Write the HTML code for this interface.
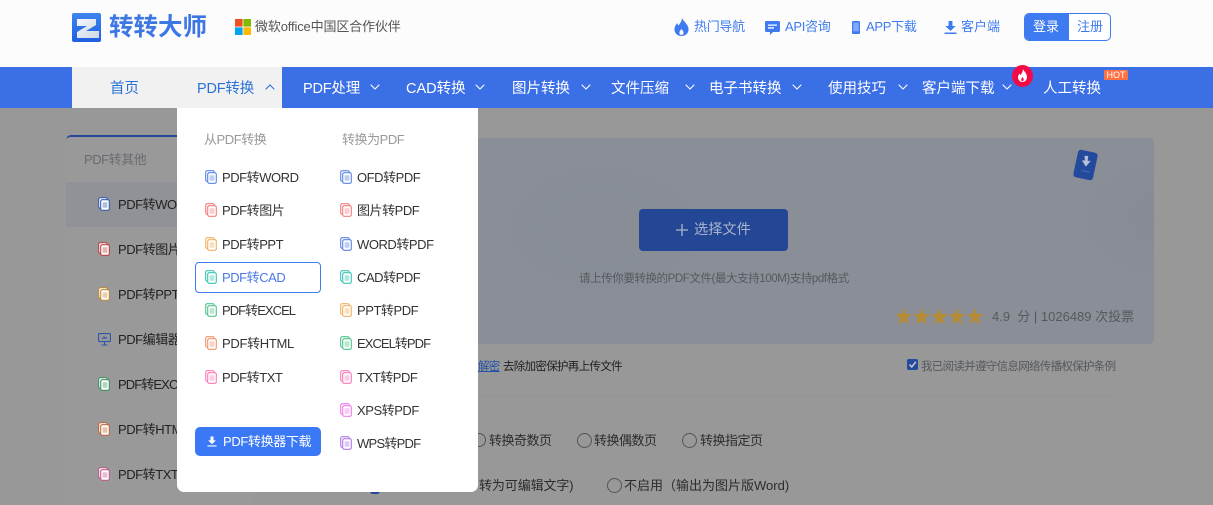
<!DOCTYPE html>
<html lang="zh"><head><meta charset="utf-8"><title>转转大师</title>
<style>
html,body{margin:0;padding:0;width:1213px;height:505px;overflow:hidden;background:#fff}
body{position:relative;font-family:"Liberation Sans","Noto Sans CJK SC",sans-serif;font-size:13px;color:#333}
.t{position:absolute;white-space:nowrap;line-height:18px}
.a{position:absolute}
svg.i{position:absolute;overflow:visible}
.n{color:#fff;font-size:14.5px;top:80px}
.h{color:#3f7bf0;font-size:13px;top:18px;letter-spacing:-.3px}
.m{color:#333;font-size:13px;letter-spacing:-.45px}
.s{color:#2c2c2c;font-size:13px;letter-spacing:-.5px}
.b{color:#222;font-size:13px;letter-spacing:-.45px}
.c{color:#55585f;font-size:11.5px;letter-spacing:-.7px}
</style></head><body>
<svg width="0" height="0" style="position:absolute"><defs>
<linearGradient id="zb" x1="0" y1="0" x2="0" y2="1"><stop offset="0" stop-color="#3f86ee"/><stop offset="1" stop-color="#1f5fe0"/></linearGradient>
<linearGradient id="zw" x1="0" y1="0" x2="1" y2="1"><stop offset="0" stop-color="#f4f7fb"/><stop offset="1" stop-color="#cfd8e4"/></linearGradient>
<g id="doc"><rect x="0.7" y="0.7" width="8.6" height="10.6" rx="1.6" fill="#fff" stroke="currentColor" stroke-width="1.1"/><rect x="2.7" y="2.7" width="8.6" height="10.6" rx="1.6" fill="#fff" stroke="currentColor" stroke-width="1.1"/><rect x="4.6" y="5.2" width="4.8" height="5.6" rx=".5" fill="currentColor" opacity=".4"/></g>
<path id="ch" d="M1 5 L5 1 L9 5" fill="none" stroke-width="1.1" stroke-linecap="round"/>
<path id="dl" d="M4.2 0h3.6v4.6h3L6 9.2 1.2 4.6h3zM.5 10.6h11V12H.5z"/>
<polygon id="star" points="8.500,0 10.600,6 17,6.200 11.900,10.100 13.800,16.500 8.500,12.700 3.200,16.500 5.100,10.100 0,6.200 6.400,6"/>
</defs></svg>

<!-- header -->
<div class="a" style="left:0;top:0;width:1213px;height:67px;background:#fcfcfc"></div>
<svg class="i" style="left:72px;top:13px" width="29" height="29" viewBox="0 0 29 29"><rect width="29" height="29" rx="2" fill="url(#zb)"/><path d="M5 6H24V12L14 18H27V25H5V19L15 13H5Z" fill="url(#zw)"/></svg>
<div class="t" style="left:109px;top:13px;font-size:24.5px;line-height:29px;font-weight:700;color:#3d77e4">转转大师</div>
<svg class="i" style="left:235px;top:19px" width="16" height="16"><rect width="7.600" height="7.600" fill="#f25022"/><rect x="8.400" width="7.600" height="7.600" fill="#7fba00"/><rect y="8.400" width="7.600" height="7.600" fill="#00a4ef"/><rect x="8.400" y="8.400" width="7.600" height="7.600" fill="#ffb900"/></svg>
<div class="t" style="left:255px;top:18px;color:#555;font-size:13px;letter-spacing:-.15px">微软office中国区合作伙伴</div>

<svg class="i" style="left:674px;top:18px" width="15" height="18" viewBox="0 0 15 18"><path d="M8 0c1 3 6 6 6.500 10.500C15 15 11.500 18 7.500 18S0 15 .5 10.500C.8 8 2.500 6.500 3 5c.8 1 1 2 1.500 2.500C6 5.500 8 3 8 0zM7.500 11c-1 1.500-2.500 2.500-2 4.500.3 1 1.200 1.500 2 1.500s1.800-.5 2-1.500c.4-2-1-3-2-4.500z" fill="#3f7bf0"/></svg>
<div class="t h" style="left:694px">热门导航</div>
<svg class="i" style="left:765px;top:21px" width="15" height="14" viewBox="0 0 15 14"><path d="M1.500 0h12A1.500 1.500 0 0 1 15 1.500v8a1.500 1.500 0 0 1-1.500 1.500H8l-3 3v-3H1.500A1.500 1.500 0 0 1 0 9.500v-8A1.500 1.500 0 0 1 1.500 0z" fill="#3f7bf0"/><path d="M3 3.500h9v1.300H3zM3 6.300h6v1.300H3z" fill="#fff"/></svg>
<div class="t h" style="left:785px">API咨询</div>
<svg class="i" style="left:852px;top:21px" width="8" height="13" viewBox="0 0 8 13"><rect width="8" height="13" rx="1.300" fill="#3f7bf0"/><rect x="1.200" y="1.700" width="5.600" height="8.600" fill="#7fa8f5"/></svg>
<div class="t h" style="left:866px">APP下载</div>
<svg class="i" style="left:944px;top:21px" width="13" height="13" viewBox="0 0 12 12" fill="#3f7bf0"><use href="#dl"/></svg>
<div class="t h" style="left:961px;letter-spacing:0">客户端</div>
<div class="a" style="left:1024px;top:13px;width:85px;height:26px;border:1px solid #3f7bf0;border-radius:5px;background:#fff;overflow:hidden"><div style="width:44px;height:26px;background:#3f7bf0"></div></div>
<div class="t" style="left:1033px;top:18px;color:#fff;font-size:13px">登录</div>
<div class="t" style="left:1077px;top:18px;color:#3f7bf0;font-size:13px">注册</div>

<!-- nav -->
<div class="a" style="left:0;top:67px;width:1213px;height:41px;background:#3b6fe6"></div>
<div class="a" style="left:72px;top:67px;width:210px;height:41px;background:#f1f1f1"></div>
<div class="t" style="left:110px;top:80px;font-size:14.5px;color:#2a72d8">首页</div>
<div class="t" style="left:197px;top:80px;font-size:14.5px;color:#2a72d8;letter-spacing:-.2px">PDF转换</div>
<svg class="i" style="left:265px;top:84px;stroke:#2a72d8" width="10" height="6"><use href="#ch"/></svg>
<div class="t n" style="left:303px;letter-spacing:-.2px">PDF处理</div>
<div class="t n" style="left:406px">CAD转换</div>
<div class="t n" style="left:512px">图片转换</div>
<div class="t n" style="left:611px">文件压缩</div>
<div class="t n" style="left:709px">电子书转换</div>
<div class="t n" style="left:828px">使用技巧</div>
<div class="t n" style="left:922px">客户端下载</div>
<div class="t n" style="left:1043px">人工转换</div>
<svg class="i" style="left:370px;top:84px;stroke:#fff;transform:scaleY(-1)" width="10" height="6"><use href="#ch"/></svg>
<svg class="i" style="left:475px;top:84px;stroke:#fff;transform:scaleY(-1)" width="10" height="6"><use href="#ch"/></svg>
<svg class="i" style="left:581px;top:84px;stroke:#fff;transform:scaleY(-1)" width="10" height="6"><use href="#ch"/></svg>
<svg class="i" style="left:685px;top:84px;stroke:#fff;transform:scaleY(-1)" width="10" height="6"><use href="#ch"/></svg>
<svg class="i" style="left:792px;top:84px;stroke:#fff;transform:scaleY(-1)" width="10" height="6"><use href="#ch"/></svg>
<svg class="i" style="left:898px;top:84px;stroke:#fff;transform:scaleY(-1)" width="10" height="6"><use href="#ch"/></svg>
<svg class="i" style="left:1002px;top:84px;stroke:#fff;transform:scaleY(-1)" width="10" height="6"><use href="#ch"/></svg>
<svg class="i" style="left:1012px;top:65px" width="21" height="22" viewBox="0 0 21 22"><ellipse cx="10.500" cy="11" rx="10.500" ry="11" fill="#f50a45"/><path d="M11 4c.5 2 4 4 4 8 0 3-2 5-4.500 5S6 15 6 12c0-1.500 1-2.500 1.500-3.500.4.700.6 1.200 1 1.500C9.800 8.500 11 6.500 11 4z" fill="#fff"/><path d="M10.500 12c-.6 1-1.500 1.700-1.200 3 .2.800.8 1.200 1.200 1.200s1-.4 1.200-1.200c.3-1.300-.6-2-1.200-3z" fill="#f50a45"/></svg>
<div class="a" style="left:1104px;top:70px;width:24px;height:10px;background:#ff7043;border-radius:1px;color:#fff;font-size:9px;line-height:10px;text-align:center">HOT</div>

<!-- dim page -->
<div class="a" style="left:0;top:108px;width:1213px;height:397px;background:#989898"></div>
<div class="a" style="left:66px;top:135px;width:186px;height:370px;background:#999;border-top:2px solid #24479a;border-radius:5px 0 0 0;box-sizing:border-box"></div>
<div class="a" style="left:66px;top:182px;width:186px;height:45px;background:#919297"></div>
<div class="t" style="left:84px;top:151px;color:#6a6a70;font-size:13px;letter-spacing:-.45px">PDF转其他</div>
<svg class="i" style="left:98px;top:197px;color:#3a5fae" width="12" height="14"><use href="#doc"/></svg><div class="t b" style="left:118px;top:196px">PDF转WORD</div>
<svg class="i" style="left:98px;top:242px;color:#bb4444" width="12" height="14"><use href="#doc"/></svg><div class="t b" style="left:118px;top:241px">PDF转图片</div>
<svg class="i" style="left:98px;top:287px;color:#bd8a36" width="12" height="14"><use href="#doc"/></svg><div class="t b" style="left:118px;top:286px">PDF转PPT</div>
<svg class="i" style="left:98px;top:333px" width="14" height="13" viewBox="0 0 14 13" fill="none" stroke="#2f55a8" stroke-width="1.100"><rect x=".6" y=".6" width="11.800" height="8" rx="1"/><path d="M6.500 8.800v3M3.500 12h6M4 6l2-2 1.500 1.500L9 4"/></svg><div class="t b" style="left:118px;top:331px">PDF编辑器</div>
<svg class="i" style="left:98px;top:377px;color:#3c9460" width="12" height="14"><use href="#doc"/></svg><div class="t b" style="left:118px;top:376px;letter-spacing:-.9px">PDF转EXCEL</div>
<svg class="i" style="left:98px;top:422px;color:#bd6a3c" width="12" height="14"><use href="#doc"/></svg><div class="t b" style="left:118px;top:421px">PDF转HTML</div>
<svg class="i" style="left:98px;top:467px;color:#c05a8c" width="12" height="14"><use href="#doc"/></svg><div class="t b" style="left:118px;top:466px">PDF转TXT</div>

<!-- upload panel -->
<div class="a" style="left:252px;top:138px;width:902px;height:206px;background:radial-gradient(ellipse 110px 70px at 930px 80px,#848993,transparent),radial-gradient(ellipse 120px 80px at 350px 90px,#878c95,transparent),#8a8f97;border-radius:5px;background-origin:border-box"></div>
<svg class="i" style="left:1072px;top:149px" width="27" height="32" viewBox="0 0 27 32"><rect x="3.500" y="2" width="20" height="28" rx="3" fill="#234a9d" transform="rotate(12 13.500 16)"/><path d="M12.500 7h3.600l-.5 5h3l-4.800 5.500-3.700-6h3zM9.500 21.500l8 1.700" fill="#b9c4da" stroke="#8c9cc0" stroke-width=".4"/></svg>
<div class="a" style="left:639px;top:209px;width:149px;height:42px;background:#244795;border-radius:4px"></div>
<svg class="i" style="left:676px;top:224px" width="12" height="12"><path d="M6 0v12M0 6h12" stroke="#a9b4cc" stroke-width="1.300"/></svg>
<div class="t" style="left:694px;top:221px;color:#a9b4cc;font-size:14.2px">选择文件</div>
<div class="t" style="left:579px;top:270px;color:#55585f;font-size:11.5px;letter-spacing:-.42px">请上传你要转换的PDF文件(最大支持100M)支持pdf格式</div>
<svg class="i" style="left:895px;top:308px" width="90" height="17" fill="#b58a35"><use href="#star" x="0"/><use href="#star" x="18"/><use href="#star" x="36"/><use href="#star" x="53.500"/><use href="#star" x="71.500"/></svg>
<div class="t" style="left:992px;top:308px;color:#55585f;font-size:13px">4.9&nbsp; 分 | 1026489 次投票</div>
<div class="t" style="left:478px;top:358px;color:#2550a8;font-size:11.5px;letter-spacing:-.7px;text-decoration:underline">解密</div>
<div class="t" style="left:503px;top:358px;color:#222;font-size:11.5px;letter-spacing:-.7px">去除加密保护再上传文件</div>
<div class="a" style="left:907px;top:359px;width:11px;height:11px;background:#234a9d;border-radius:2px"></div>
<svg class="i" style="left:907px;top:359px" width="11" height="11"><path d="M2.500 5.500L4.800 8 8.800 2.800" fill="none" stroke="#ccc" stroke-width="1.500"/></svg>
<div class="t c" style="left:921px;top:358px">我已阅读并遵守信息网络传播权保护条例</div>
<div class="a" style="left:478px;top:395px;width:637px;height:1px;background:#939393"></div>
<div class="a" style="left:472px;top:433px;width:14px;height:14px;border:1px solid #555;border-radius:50%;box-sizing:border-box"></div>
<div class="t s" style="left:489px;top:432px">转换奇数页</div>
<div class="a" style="left:577px;top:433px;width:15px;height:15px;border:1px solid #555;border-radius:50%;box-sizing:border-box"></div>
<div class="t s" style="left:594px;top:432px">转换偶数页</div>
<div class="a" style="left:682px;top:433px;width:15px;height:15px;border:1px solid #555;border-radius:50%;box-sizing:border-box"></div>
<div class="t s" style="left:700px;top:432px">转换指定页</div>
<div class="t s" style="left:479px;top:477px;letter-spacing:-.1px">转为可编辑文字)</div>
<div class="a" style="left:607px;top:478px;width:15px;height:15px;border:1px solid #555;border-radius:50%;box-sizing:border-box"></div>
<div class="t s" style="left:624px;top:477px;letter-spacing:0">不启用（输出为图片版Word)</div>
<div class="a" style="left:370px;top:491px;width:10px;height:3px;background:#244795;border-radius:0 0 5px 5px"></div>

<!-- dropdown -->
<div class="a" style="left:177px;top:108px;width:301px;height:384px;background:#fff;border-radius:0 0 7px 7px"></div>
<div class="t" style="left:204px;top:131px;color:#999;font-size:13px;letter-spacing:-.45px">从PDF转换</div>
<div class="t" style="left:342px;top:131px;color:#999;font-size:13px;letter-spacing:-.45px">转换为PDF</div>
<div class="a" style="left:195px;top:262px;width:126px;height:31px;border:1px solid #3f7bf0;border-radius:4px;box-sizing:border-box"></div>

<svg class="i" style="left:205px;top:170px;color:#5b84e6" width="12" height="14"><use href="#doc"/></svg><div class="t m" style="left:222px;top:169px">PDF转WORD</div>
<svg class="i" style="left:205px;top:203px;color:#f27d7d" width="12" height="14"><use href="#doc"/></svg><div class="t m" style="left:222px;top:202px">PDF转图片</div>
<svg class="i" style="left:205px;top:237px;color:#f0b060" width="12" height="14"><use href="#doc"/></svg><div class="t m" style="left:222px;top:236px">PDF转PPT</div>
<svg class="i" style="left:205px;top:270px;color:#3cc4b4" width="12" height="14"><use href="#doc"/></svg><div class="t m" style="left:222px;top:269px;color:#4a78e8">PDF转CAD</div>
<svg class="i" style="left:205px;top:303px;color:#50c48c" width="12" height="14"><use href="#doc"/></svg><div class="t m" style="left:222px;top:302px;letter-spacing:-.95px">PDF转EXCEL</div>
<svg class="i" style="left:205px;top:336px;color:#f0946a" width="12" height="14"><use href="#doc"/></svg><div class="t m" style="left:222px;top:335px;letter-spacing:-.3px">PDF转HTML</div>
<svg class="i" style="left:205px;top:370px;color:#fb7ab8" width="12" height="14"><use href="#doc"/></svg><div class="t m" style="left:222px;top:369px">PDF转TXT</div>

<svg class="i" style="left:340px;top:170px;color:#5b84e6" width="12" height="14"><use href="#doc"/></svg><div class="t m" style="left:357px;top:169px">OFD转PDF</div>
<svg class="i" style="left:340px;top:203px;color:#f27d7d" width="12" height="14"><use href="#doc"/></svg><div class="t m" style="left:357px;top:202px">图片转PDF</div>
<svg class="i" style="left:340px;top:237px;color:#5b84e6" width="12" height="14"><use href="#doc"/></svg><div class="t m" style="left:357px;top:236px">WORD转PDF</div>
<svg class="i" style="left:340px;top:270px;color:#3cc4b4" width="12" height="14"><use href="#doc"/></svg><div class="t m" style="left:357px;top:269px">CAD转PDF</div>
<svg class="i" style="left:340px;top:303px;color:#f0b060" width="12" height="14"><use href="#doc"/></svg><div class="t m" style="left:357px;top:302px">PPT转PDF</div>
<svg class="i" style="left:340px;top:336px;color:#50c48c" width="12" height="14"><use href="#doc"/></svg><div class="t m" style="left:357px;top:335px;letter-spacing:-.95px">EXCEL转PDF</div>
<svg class="i" style="left:340px;top:370px;color:#fb7ab8" width="12" height="14"><use href="#doc"/></svg><div class="t m" style="left:357px;top:369px">TXT转PDF</div>
<svg class="i" style="left:340px;top:403px;color:#f07ae8" width="12" height="14"><use href="#doc"/></svg><div class="t m" style="left:357px;top:402px">XPS转PDF</div>
<svg class="i" style="left:340px;top:436px;color:#b07ae8" width="12" height="14"><use href="#doc"/></svg><div class="t m" style="left:357px;top:435px;letter-spacing:-.75px">WPS转PDF</div>

<div class="a" style="left:195px;top:427px;width:126px;height:29px;background:#3b78f5;border-radius:5px"></div>
<svg class="i" style="left:207px;top:436px" width="10" height="11" viewBox="0 0 12 12" fill="#fff"><use href="#dl"/></svg>
<div class="t" style="left:223px;top:433px;color:#fff;font-size:13px;letter-spacing:-.35px">PDF转换器下载</div>
</body></html>
